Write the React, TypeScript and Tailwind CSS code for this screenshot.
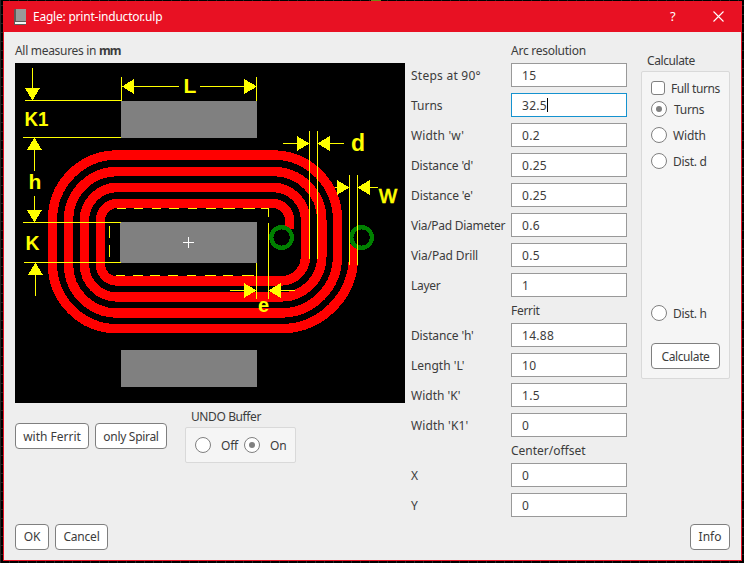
import { ReactNode } from "react";

const Button = ({ children, className }: { children: ReactNode; className: string }) => (
  <button className={`flex h-[26px] items-center justify-center rounded-[4px] border border-[#7f7f7f] bg-white whitespace-nowrap ${className}`}>
    {children}
  </button>
);

const Radio = ({ checked = false }: { checked?: boolean }) => (
  <span className="flex h-4 w-4 shrink-0 items-center justify-center rounded-full border border-[#808080] bg-white">
    {checked && <span className="h-1.5 w-1.5 rounded-full bg-[#808080]" />}
  </span>
);

const Heading = ({ children, className = "" }: { children: ReactNode; className?: string }) => (
  <div className={`h-[14px] pt-px leading-[14px] whitespace-nowrap ${className}`}>{children}</div>
);

type FieldProps = { label: string; value: string; focused?: boolean; track?: string };

const Field = ({ label, value, focused = false, track = "" }: FieldProps) => (
  <div className="flex h-6 items-center">
    <label className={`w-[100px] shrink-0 pt-px whitespace-nowrap ${track}`}>{label}</label>
    <div className={`flex h-6 w-[116px] items-center border bg-white pt-px pl-[10px] ${focused ? "border-[#1592cf]" : "border-[#999999]"}`}>
      <span className="tracking-[0.3px]">{value}</span>
      {focused && <span className="-mt-px h-[14px] w-px bg-black" />}
    </div>
  </div>
);

const topDashes = [[117, 9], [134, 9], [152, 9], [169, 10], [188, 9], [206, 10], [223, 12], [243, 12], [261, 8]];
const bottomDashes = [[116, 9], [133, 10], [150, 10], [168, 10], [187, 9], [205, 11], [223, 10], [242, 12]];

const spiral =
  "M289.5 229V220A16.5 16.5 0 0 0 273 203.5H117A16.5 16.5 0 0 0 100.5 220V264.5A16.5 16.5 0 0 0 117 281H281A24.5 24.5 0 0 0 305.5 256.5" +
  "V220A32.5 32.5 0 0 0 273 187.5H117A32.5 32.5 0 0 0 84.5 220V264.5A32.5 32.5 0 0 0 117 297H281A40.5 40.5 0 0 0 321.8 256.5" +
  "V220A48.5 48.5 0 0 0 273 171.5H117A48.5 48.5 0 0 0 68.5 220V264.5A48.5 48.5 0 0 0 117 313H281A56.5 56.5 0 0 0 337.5 256.5" +
  "V220A64.5 64.5 0 0 0 273 155H117A64.5 64.5 0 0 0 52.5 220V264.5A64.5 64.5 0 0 0 117 328.7H281A72.5 72.5 0 0 0 353.5 256.5V244";

const Diagram = () => (
  <svg width="390" height="340" viewBox="15 63 390 340" shapeRendering="crispEdges" className="block bg-black">
    <g fill="#808080">
      <rect x="121" y="101" width="136" height="37" />
      <rect x="120" y="222" width="137" height="41" />
      <rect x="121" y="350" width="136" height="37" />
    </g>
    <path d={spiral} fill="none" stroke="#ff0000" strokeWidth="9.4" />
    <g fill="none" stroke="#008000" strokeWidth="4.3">
      <circle cx="281.6" cy="237.5" r="10.3" />
      <circle cx="361.6" cy="237.5" r="10.3" />
    </g>
    <path d="M183 242.5H194M188.5 237V248" stroke="#ffffff" />
    <g stroke="#ffff00" strokeWidth="1">
      <path d="M32.5 68V89M25 100.5H122M121.5 77V101M134 86.5H179M200 86.5H245M256.5 77V101" />
      <path d="M23 137.5H121M34.5 149V171M34.5 196V211M23 222.5H121M24 262.5H121M35.5 274V296" />
      <path d="M309.5 131V259M317.5 131V259M283 143.5H298M329 143.5H344" />
      <path d="M349.5 175V265M357.5 175V265M335 187.5H338M369 187.5H378" />
      <path d="M268.5 208V217M268.5 223V299M256.5 263V299M230 290.5H245M280 290.5H295" />
      <path d="M109.5 226V238M109.5 245V257" />
    </g>
    <g fill="#ffff00">
      {topDashes.map(([x, w]) => <rect key={x} x={x} y="208" width={w} height="1" />)}
      {bottomDashes.map(([x, w]) => <rect key={x} x={x} y="275" width={w} height="1" />)}
      <path d="M25 88H40L32.5 100.5ZM122 86.5L134 79V94ZM257 86.5L244 79V94Z" />
      <path d="M27 150H42L34.5 137.5ZM27 210H42L34.5 222.5ZM28 275H43L35.5 262.5Z" />
      <path d="M309.5 143.5L297 136V151ZM317.5 143.5L330 136V151Z" />
      <path d="M349.5 187.5L337 180V195ZM357.5 187.5L370 180V195Z" />
      <path d="M256.5 290.5L244 283V298ZM268.5 290.5L281 283V298Z" />
    </g>
    <g fill="#ffff00" fontWeight="bold" fontFamily="'Liberation Sans', Arial, sans-serif">
      <text x="183.5" y="93" fontSize="21">L</text>
      <text x="24.5" y="126" fontSize="21" textLength="24" lengthAdjust="spacingAndGlyphs">K1</text>
      <text x="28.5" y="189" fontSize="21">h</text>
      <text x="25.5" y="250" fontSize="21" textLength="14" lengthAdjust="spacingAndGlyphs">K</text>
      <text x="351" y="151" fontSize="23">d</text>
      <text x="379" y="203" fontSize="25" fontWeight="normal" stroke="#ffff00" strokeWidth="0.6">w</text>
      <text x="258" y="312" fontSize="20">e</text>
    </g>
  </svg>
);

export default function App() {
  return (
    <div className="h-[563px] w-[744px] overflow-hidden bg-black bg-[repeating-linear-gradient(0deg,transparent_0_8px,#242424_8px_9px),repeating-linear-gradient(90deg,#242424_0_1px,transparent_1px_9px)] pl-[3px] font-['Noto_Sans','Open_Sans',sans-serif] text-[12px] text-[#3c3c3c]">
      <div className="flex h-px pl-[368px]"><span className="w-[10px] bg-[#6f8a16]" /></div>
      <div className="flex h-[560px] w-[739px] flex-col border border-[#e81123] bg-[#eeeeee]">
        <header className="flex h-[30px] shrink-0 items-center bg-[#e81123] pl-[10px] text-white">
          <svg width="12" height="16" viewBox="0 0 12 16" shapeRendering="crispEdges" className="-mt-px">
            <rect width="12" height="16" fill="#5f5a58" />
            <rect x="2" width="10" height="12" fill="#999999" />
            <rect x="1" y="13" width="11" height="2" fill="#f5f5f5" />
          </svg>
          <span className="ml-[7px] grow tracking-[-0.22px]">Eagle: print-inductor.ulp</span>
          <span className="w-[43px] text-[13px]">?</span>
          <svg className="mr-[17px] -mt-px" width="11" height="11" viewBox="0 0 11 11" stroke="#fff" strokeWidth="1.1">
            <path d="M.5.5l10 10M10.5.5l-10 10" />
          </svg>
        </header>

        <main className="flex grow pt-[11px] pl-[11px]">
          <section className="flex w-[396px] shrink-0 flex-col">
            <Heading className="mb-[6px] tracking-[-0.3px]">All measures in <b className="tracking-[-0.9px]">mm</b></Heading>
            <Diagram />
            <div className="flex pt-[6px]">
              <Button className="mt-[14px] w-[74px] pt-px">with Ferrit</Button>
              <Button className="mt-[14px] ml-[6px] w-[72px] pt-px tracking-[-0.3px]">only Spiral</Button>
              <div className="ml-[18px]">
                <Heading className="pl-[6px] tracking-[-0.4px]">UNDO Buffer</Heading>
                <div className="mt-1 flex h-9 w-[111px] items-center rounded-[2px] border border-[#d9d9d9] bg-[#f5f5f5] pl-[9px]">
                  <Radio />
                  <span className="ml-[10px] w-[23px] pt-px tracking-[-0.2px]">Off</span>
                  <Radio checked />
                  <span className="ml-[10px] pt-px tracking-[-0.2px]">On</span>
                </div>
              </div>
            </div>
            <div className="mt-auto mb-[10px] flex gap-[6px]">
              <Button className="w-[34px] tracking-[-0.2px]">OK</Button>
              <Button className="w-[53px] tracking-[-0.2px]">Cancel</Button>
            </div>
          </section>

          <section className="flex w-[216px] shrink-0 flex-col gap-[6px]">
            <Heading className="pl-[100px] tracking-[-0.25px]">Arc resolution</Heading>
            <Field label="Steps at 90°" value="15" track="tracking-[0.25px]" />
            <Field label="Turns" value="32.5" focused />
            <Field label="Width 'w'" value="0.2" track="tracking-[0.15px]" />
            <Field label="Distance 'd'" value="0.25" track="tracking-[-0.15px]" />
            <Field label="Distance 'e'" value="0.25" track="tracking-[-0.1px]" />
            <Field label="Via/Pad Diameter" value="0.6" track="tracking-[-0.28px]" />
            <Field label="Via/Pad Drill" value="0.5" track="tracking-[-0.15px]" />
            <Field label="Layer" value="1" track="tracking-[-0.3px]" />
            <Heading className="pl-[100px] tracking-[-0.3px]">Ferrit</Heading>
            <Field label="Distance 'h'" value="14.88" track="tracking-[-0.15px]" />
            <Field label="Length 'L'" value="10" />
            <Field label="Width 'K'" value="1.5" />
            <Field label="Width 'K1'" value="0" track="tracking-[0.1px]" />
            <Heading className="pl-[100px]">Center/offset</Heading>
            <Field label="X" value="0" />
            <Field label="Y" value="0" />
          </section>

          <section className="ml-[14px] flex w-[89px] flex-col pt-[10px]">
            <Heading className="pl-[6px] tracking-[-0.4px]">Calculate</Heading>
            <div className="mt-1 flex h-[308px] flex-col rounded-[2px] border border-[#d9d9d9] bg-[#f5f5f5] px-[9px] pt-[9px]">
              <div className="flex h-[14px] items-center">
                <span className="h-[14px] w-[14px] shrink-0 rounded-[3px] border border-[#808080] bg-white" />
                <span className="ml-[6px] pt-px tracking-[-0.4px] whitespace-nowrap">Full turns</span>
              </div>
              <div className="mt-[6px] flex h-4 items-center gap-[7px] tracking-[-0.3px]"><Radio checked /><span className="pt-px">Turns</span></div>
              <div className="mt-[10px] flex h-4 items-center gap-[6px] tracking-[-0.1px]"><Radio /><span className="pt-px">Width</span></div>
              <div className="mt-[10px] flex h-4 items-center gap-[6px] tracking-[-0.3px]"><Radio /><span className="pt-px">Dist. d</span></div>
              <div className="mt-auto flex h-4 items-center gap-[6px] tracking-[-0.3px]"><Radio /><span className="pt-px">Dist. h</span></div>
              <Button className="mt-[22px] mb-[9px] w-[69px] shrink-0 pt-px tracking-[-0.4px]">Calculate</Button>
            </div>
            <Button className="mt-auto mb-[10px] w-10 self-end">Info</Button>
          </section>
        </main>
      </div>
    </div>
  );
}
